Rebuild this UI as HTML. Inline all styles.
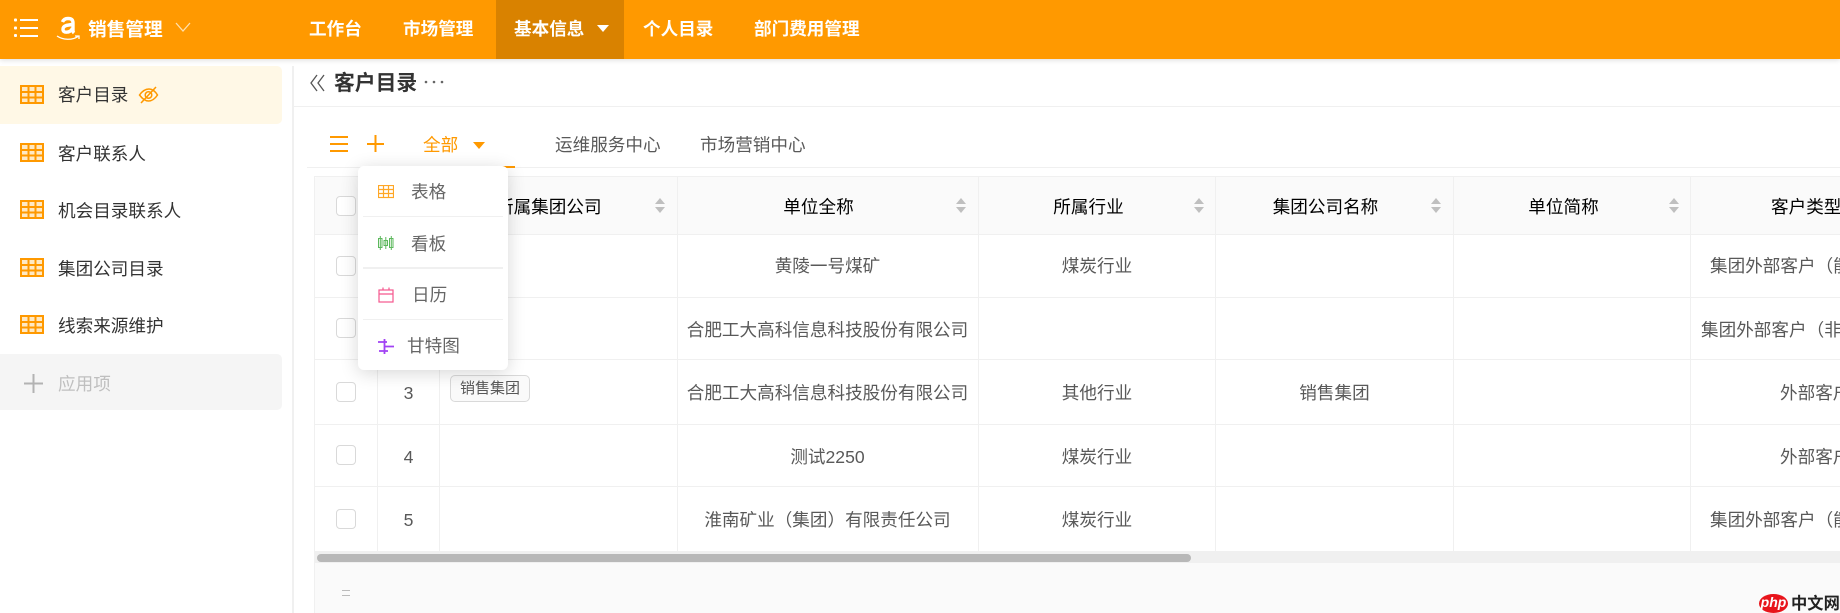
<!DOCTYPE html>
<html lang="zh"><head><meta charset="utf-8"><title>客户目录</title>
<style>
html,body{margin:0;padding:0;width:1840px;height:613px;overflow:hidden;background:#fff}
body{position:relative;font-family:"Liberation Sans","Noto Sans CJK SC",sans-serif;font-size:17.6px;color:#595959}
.a,.t,.c,svg{position:absolute}
.t{white-space:nowrap;line-height:24px;height:24px}
.c{white-space:nowrap;line-height:24px;height:24px;text-align:center}
.n{color:#fff;font-weight:700;top:17px}
.s{color:#333;left:58px}
.h{color:#000;width:237px}
.l{background:#f0f0f0}
.cb{position:absolute;left:336px;width:18px;height:18px;border:1px solid #d9d9d9;border-radius:4px;background:#fff}
</style></head><body>
<div class="a" style="left:0;top:0;width:1840px;height:59px;background:#ff9900;box-shadow:0 1px 5px rgba(0,0,0,.14)"></div>
<svg style="left:14px;top:17px" width="26" height="22" viewBox="0 0 26 22" fill="#fff"><rect x="0" y="1.500" width="3" height="3" rx="1"/><rect x="0" y="9.500" width="3" height="3" rx="1"/><rect x="0" y="17" width="3" height="3" rx="1"/><rect x="6" y="2" width="18" height="2"/><rect x="6" y="10" width="18" height="2"/><rect x="6" y="18" width="18" height="2"/></svg>
<svg style="left:56px;top:16px" width="26" height="26" viewBox="0 0 26 26" fill="none" stroke="#fff"><path d="M6.500 6C7.500 3.500 9.500 2.500 12 2.500c3.500 0 5 1.500 5 4.500V15c0 1 .5 1.500 1 2" stroke-width="3.400"/><path d="M16.500 8.500c-5 .5-9.500 1-9.500 4.700 0 2 1.300 3 3.300 3 3 0 5.200-1.600 6.200-4" stroke-width="3.400"/><path d="M1 20c6 4 15 4.500 21 .5M19 20h4v3" stroke-width="1.300"/></svg>
<div class="t" style="left:88px;top:18px;color:#fff;font-weight:700;font-size:18.700px">销售管理</div>
<svg style="left:175px;top:22px" width="16" height="11" viewBox="0 0 16 11" fill="none" stroke="#ffe0ad" stroke-width="1.300"><path d="M1 1l7 8 7-8"/></svg>
<div class="t n" style="left:309px">工作台</div>
<div class="t n" style="left:403px">市场管理</div>
<div class="a" style="left:496px;top:0;width:128px;height:59px;background:#d98200"></div>
<div class="t n" style="left:514px">基本信息</div>
<svg style="left:597px;top:25px" width="12" height="8" viewBox="0 0 12 8" fill="#fff"><path d="M0 0h12L6 7z"/></svg>
<div class="t n" style="left:643px">个人目录</div>
<div class="t n" style="left:754px">部门费用管理</div>

<div class="a l" style="left:292px;top:66px;width:2px;height:547px;background:#f0f0f0"></div>
<div class="a" style="left:0;top:66px;width:282px;height:58px;background:#fff8e6;border-radius:0 5px 5px 0"></div>
<div class="a" style="left:0;top:354px;width:282px;height:56px;background:#f5f5f5;border-radius:0 5px 5px 0"></div>

<svg width="0" height="0" style="left:0;top:0"><defs><g id="g"><rect x="1" y="1" width="22" height="17" fill="#ffe9c4" stroke="#ff9900" stroke-width="2"/><path d="M1 7h22M1 12.500h22M8.500 1v17M15.500 1v17" stroke="#ff9900" stroke-width="2" fill="none"/></g></defs></svg>
<svg style="left:20px;top:85px" width="24" height="20"><use href="#g"/></svg>
<svg style="left:20px;top:143px" width="24" height="20"><use href="#g"/></svg>
<svg style="left:20px;top:200px" width="24" height="20"><use href="#g"/></svg>
<svg style="left:20px;top:258px" width="24" height="20"><use href="#g"/></svg>
<svg style="left:20px;top:315px" width="24" height="20"><use href="#g"/></svg>
<div class="t s" style="top:83px">客户目录</div>
<div class="t s" style="top:142px">客户联系人</div>
<div class="t s" style="top:199px">机会目录联系人</div>
<div class="t s" style="top:257px">集团公司目录</div>
<div class="t s" style="top:314px">线索来源维护</div>
<div class="t s" style="top:372px;color:#bfbfbf">应用项</div>
<svg style="left:138px;top:85px" width="21" height="20" viewBox="0 0 21 20" fill="none" stroke="#ff9900" stroke-width="1.500"><path d="M1.500 10C5 5 8 4 11 4s6 2 8.500 6c-3 4.500-6 6-9 6s-6-2-9-6z"/><circle cx="10.500" cy="10" r="3.300"/><path d="M3 18L18 2"/></svg>
<svg style="left:24px;top:374px" width="19" height="19" viewBox="0 0 19 19" fill="#b3b3b3"><rect x="0" y="8.500" width="19" height="2"/><rect x="8.500" y="0" width="2" height="19"/></svg>

<svg style="left:310px;top:74px" width="15" height="18" viewBox="0 0 15 18" fill="none" stroke="#555" stroke-width="1.300"><path d="M7 1L1 9l6 8M14 1L8 9l6 8"/></svg>
<div class="t" style="left:334px;top:72px;font-size:20.800px;font-weight:700;color:#333">客户目录</div>
<svg style="left:424px;top:80px" width="21" height="4" fill="#666"><circle cx="2" cy="2" r="1.300"/><circle cx="10" cy="2" r="1.300"/><circle cx="18" cy="2" r="1.300"/></svg>
<div class="a l" style="left:294px;top:106px;width:1546px;height:1px"></div>

<div class="a l" style="left:307px;top:167px;width:1533px;height:1px"></div>
<svg style="left:329px;top:135px" width="20" height="18" fill="#ff9900"><rect x="1" y="1" width="18" height="2"/><rect x="1" y="8" width="18" height="2"/><rect x="1" y="15" width="18" height="2"/></svg>
<svg style="left:367px;top:135px" width="18" height="18" fill="#ff9900"><rect x="0" y="8" width="17" height="2"/><rect x="7.500" y="0" width="2" height="17"/></svg>
<div class="t" style="left:423px;top:133px;color:#ff9900">全部</div>
<svg style="left:472px;top:141px" width="14" height="9" fill="#ff9900"><path d="M1 1h12L7 8z"/></svg>
<div class="a" style="left:410px;top:166px;width:105px;height:2px;background:#ff9900"></div>
<div class="t" style="left:555px;top:133px">运维服务中心</div>
<div class="t" style="left:700px;top:133px">市场营销中心</div>

<!-- table -->
<div class="a" style="left:314px;top:176px;width:1526px;height:58px;background:#fafafa;border-radius:5px 0 0 0"></div>
<div class="a l" style="left:314px;top:176px;width:1526px;height:1px"></div>
<div class="a l" style="left:314px;top:176px;width:1px;height:437px"></div>
<div class="a l" style="left:314px;top:234px;width:1526px;height:1px"></div>
<div class="a l" style="left:314px;top:297px;width:1526px;height:1px"></div>
<div class="a l" style="left:314px;top:359px;width:1526px;height:1px"></div>
<div class="a l" style="left:314px;top:424px;width:1526px;height:1px"></div>
<div class="a l" style="left:314px;top:486px;width:1526px;height:1px"></div>
<div class="a l" style="left:377px;top:176px;width:1px;height:375px"></div>
<div class="a l" style="left:439px;top:176px;width:1px;height:375px"></div>
<div class="a l" style="left:677px;top:176px;width:1px;height:375px"></div>
<div class="a l" style="left:978px;top:176px;width:1px;height:375px"></div>
<div class="a l" style="left:1215px;top:176px;width:1px;height:375px"></div>
<div class="a l" style="left:1453px;top:176px;width:1px;height:375px"></div>
<div class="a l" style="left:1690px;top:176px;width:1px;height:375px"></div>

<div class="cb" style="top:196px"></div>
<div class="cb" style="top:256px"></div>
<div class="cb" style="top:318px"></div>
<div class="cb" style="top:382px"></div>
<div class="cb" style="top:445px"></div>
<div class="cb" style="top:509px"></div>

<div class="t" style="left:496px;top:195px;color:#000">所属集团公司</div>
<div class="c h" style="left:700px;top:195px">单位全称</div>
<div class="c h" style="left:970px;top:195px">所属行业</div>
<div class="c h" style="left:1207px;top:195px">集团公司名称</div>
<div class="c h" style="left:1445px;top:195px">单位简称</div>
<div class="t" style="left:1771px;top:195px;color:#000">客户类型</div>
<svg style="left:654px;top:198px" width="12" height="15" fill="#bfbfbf"><path d="M6 0l5 6H1zM6 15l5-6H1z"/></svg>
<svg style="left:955px;top:198px" width="12" height="15" fill="#bfbfbf"><path d="M6 0l5 6H1zM6 15l5-6H1z"/></svg>
<svg style="left:1193px;top:198px" width="12" height="15" fill="#bfbfbf"><path d="M6 0l5 6H1zM6 15l5-6H1z"/></svg>
<svg style="left:1430px;top:198px" width="12" height="15" fill="#bfbfbf"><path d="M6 0l5 6H1zM6 15l5-6H1z"/></svg>
<svg style="left:1668px;top:198px" width="12" height="15" fill="#bfbfbf"><path d="M6 0l5 6H1zM6 15l5-6H1z"/></svg>

<div class="c" style="left:378px;top:381px;width:61px">3</div>
<div class="c" style="left:378px;top:445px;width:61px">4</div>
<div class="c" style="left:378px;top:508px;width:61px">5</div>
<div class="a" style="left:450px;top:375px;width:78px;height:25px;border:1px solid #d9d9d9;border-radius:5px;background:#fafafa;font-size:15px;line-height:26px;text-align:center;color:#595959">销售集团</div>

<div class="c" style="left:678px;top:254px;width:299px">黄陵一号煤矿</div>
<div class="c" style="left:678px;top:318px;width:299px">合肥工大高科信息科技股份有限公司</div>
<div class="c" style="left:678px;top:381px;width:299px">合肥工大高科信息科技股份有限公司</div>
<div class="c" style="left:678px;top:445px;width:299px">测试2250</div>
<div class="c" style="left:678px;top:508px;width:299px">淮南矿业（集团）有限责任公司</div>
<div class="c" style="left:979px;top:254px;width:236px">煤炭行业</div>
<div class="c" style="left:979px;top:381px;width:236px">其他行业</div>
<div class="c" style="left:979px;top:445px;width:236px">煤炭行业</div>
<div class="c" style="left:979px;top:508px;width:236px">煤炭行业</div>
<div class="c" style="left:1216px;top:381px;width:237px">销售集团</div>
<div class="t" style="left:1710px;top:254px">集团外部客户（能源</div>
<div class="t" style="left:1701px;top:318px">集团外部客户（非煤</div>
<div class="t" style="left:1780px;top:381px">外部客户</div>
<div class="t" style="left:1780px;top:445px">外部客户</div>
<div class="t" style="left:1710px;top:508px">集团外部客户（能源</div>

<div class="a" style="left:315px;top:551px;width:1525px;height:12px;background:#f0f0f0"></div>
<div class="a" style="left:317px;top:554px;width:874px;height:8px;background:#b8b8b8;border-radius:4px"></div>
<div class="a" style="left:315px;top:563px;width:1525px;height:50px;background:#fafafa"></div>
<svg style="left:341px;top:590px" width="10" height="7" fill="#bbb"><rect x="1" y="0" width="8" height="1"/><rect x="1" y="5" width="8" height="1"/></svg>

<!-- dropdown -->
<div class="a" style="left:358px;top:166px;width:150px;height:204px;background:#fff;border-radius:6px;box-shadow:0 3px 18px rgba(0,0,0,.16)"></div>
<div class="a l" style="left:363px;top:216px;width:140px;height:1px"></div>
<div class="a l" style="left:363px;top:267px;width:140px;height:2px"></div>
<div class="a l" style="left:363px;top:319px;width:140px;height:1px"></div>
<svg style="left:378px;top:185px" width="16" height="14" fill="none" stroke="#ffa726" stroke-width="1.200"><rect x=".5" y=".5" width="15" height="12"/><path d="M0 4.500h16M0 8.500h16M5.500 0v13M10.500 0v13"/></svg>
<svg style="left:378px;top:235px" width="16" height="16" fill="none" stroke="#5cb85c" stroke-width="1"><rect x=".5" y="3.500" width="3.500" height="9"/><rect x="6" y="5.500" width="3.500" height="5"/><rect x="11.500" y="3.500" width="3.500" height="9"/><path d="M2.300 1v14M7.800 2v12M13.300 1v14"/></svg>
<svg style="left:378px;top:287px" width="16" height="16" fill="none" stroke="#f5588e" stroke-width="1.200"><rect x="1" y="3" width="14" height="12"/><path d="M1 7h14M5 0.500v3M11 0.500v3"/></svg>
<svg style="left:378px;top:339px" width="16" height="15" fill="none" stroke="#a142f4" stroke-width="1.800"><path d="M0 3h9M6 7.500h10M1 12h9M6.500 0v15"/></svg>
<div class="t" style="left:411px;top:180px;color:#666">表格</div>
<div class="t" style="left:411px;top:232px;color:#666">看板</div>
<div class="t" style="left:412px;top:283px;color:#666">日历</div>
<div class="t" style="left:407px;top:334px;color:#666">甘特图</div>

<!-- watermark -->
<div class="a" style="left:1759px;top:594px;width:29px;height:19px;background:#e8141b;border-radius:50%;color:#fff;font:italic 700 14px/17px 'Liberation Sans',sans-serif;text-align:center">php</div>
<div class="t" style="left:1791px;top:592px;color:#222;font-weight:700;font-size:16.300px">中文网</div>
</body></html>
